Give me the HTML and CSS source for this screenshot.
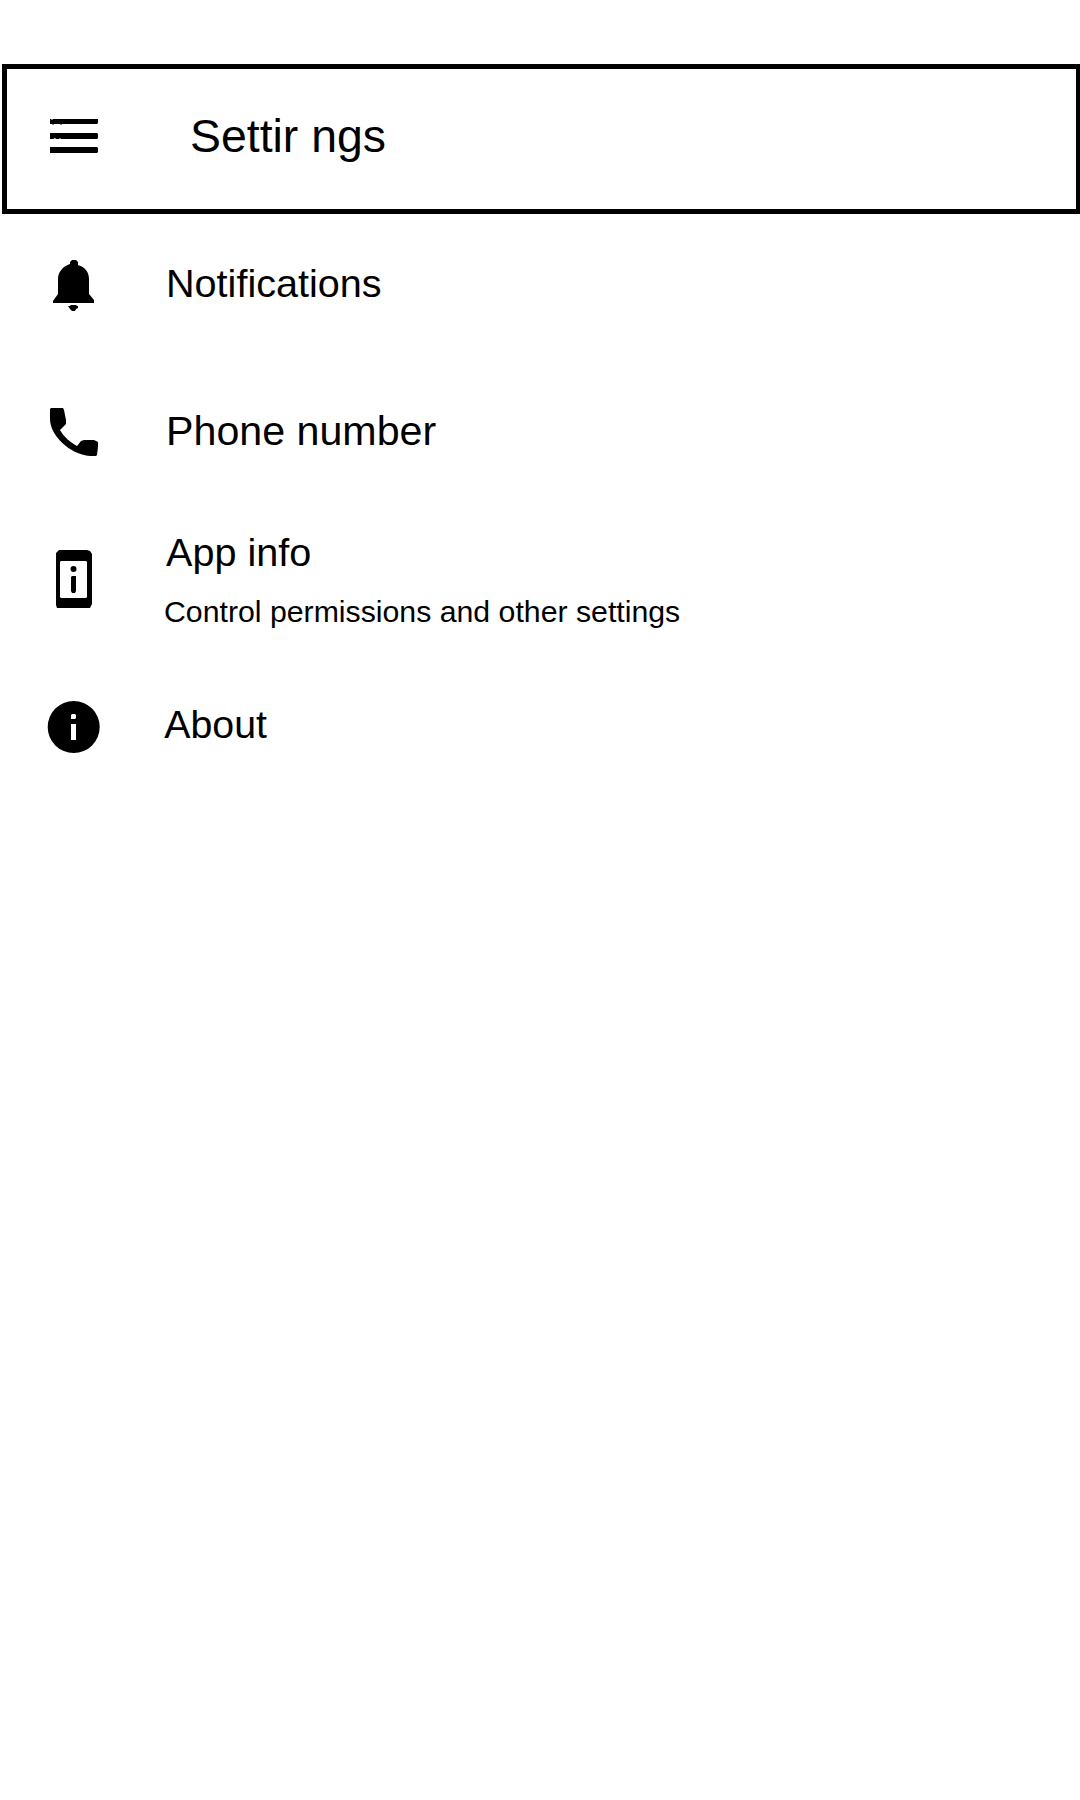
FILE: index.html
```html
<!DOCTYPE html>
<html lang="en">
<head>
<meta charset="utf-8">
<title>Settings</title>
<link rel="stylesheet" href="styles.css">
</head>
<body>
<header class="toolbar">
  <svg class="icon" viewBox="0 0 60 60"><path d="M6 10h1l1 1 1-1h45v4l-1 1H18l-1 1-1-1h-6l-1 1-1-1H6zM6 24h47l1 1v4l-1 1H17l-1-1-1 1h-3l-1-1-2 1H6zM6 38h47l1 1v4l-1 1H6z"/></svg>
  <h1 class="title">Settir ngs</h1>
</header>
<main class="list">
  <div class="row notifications">
    <svg class="icon" viewBox="0 0 60 60"><path d="M26 8V6l2-2h4l2 2v3c7 2 11 7 11 14v15l5 6v3H9v-2l5-7V23c0-7 5-13 12-15zM24 50h2l1-1h5l1 1h1v2l-2 1-1 2h-3l-2-2z"/></svg>
    <span class="label">Notifications</span>
  </div>
  <div class="row phone">
    <svg class="icon" viewBox="0 0 60 60"><path d="M6 8l1-1h12l1 2 2 10v4l-6 6c4 7 10 12 17 16l4-5 3-1h10l4 2v5l-1 8-1 1h-6C25 53 6 34 6 18z"/></svg>
    <span class="label">Phone number</span>
  </div>
  <div class="row app">
    <svg class="icon" viewBox="0 0 60 60"><path fill-rule="evenodd" d="M15 1h28l3 1 2 3v50l-2 4H13l-1-3V4zM17 12h25l1 1v35l-1 1H17l-1-1V13z"/><circle cx="29.5" cy="20" r="3"/><path d="M27 28l1-1h4v15l-1 2h-3l-1-2z"/></svg>
    <div class="texts">
      <span class="label">App info</span>
      <span class="detail">Control permissions and other settings</span>
    </div>
  </div>
  <div class="row about">
    <svg class="icon" viewBox="0 0 60 60"><path fill-rule="evenodd" d="M29.700 4a26 26 0 1 1 0 52a26 26 0 1 1 0-52zM27 18l1-1h3l1 1v3l-1 1h-4zM27 27h5v16h-5z"/></svg>
    <span class="label">About</span>
  </div>
</main>
</body>
</html>
```
FILE: styles.css
```css
* { box-sizing: border-box; }
body {
  margin: 0;
  padding-top: 64px;
  min-height: 1800px;
  background: #fff;
  color: #000;
  font-family: "Liberation Sans", Arial, sans-serif;
}
.toolbar {
  display: flex;
  align-items: center;
  height: 150px;
  margin-left: 2px;
  padding-left: 37px;
  border: 5px solid #000;
  border-right-width: 4px;
}
.icon { width: 60px; height: 60px; flex: none; fill: #000; }
.title {
  margin: 0 0 6px 86px;
  font-size: 46.4px;
  line-height: 56px;
  font-weight: 400;
}
.row { display: flex; align-items: center; height: 146px; padding-left: 44px; }
.label { font-size: 39.6px; line-height: 50px; white-space: nowrap; }
.notifications { height: 144px; }
.notifications .label { margin: 0 0 7px 62px; }
.phone .label { margin-left: 62px; font-size: 41.2px; }
.app { height: 150px; }
.texts { display: flex; flex-direction: column; gap: 15px; margin: 1px 0 0 60px; }
.app .label { margin-left: 2px; }
.detail { font-size: 30.25px; line-height: 40px; white-space: nowrap; }
.about .label { margin: 0 0 7px 60.3px; font-size: 39.3px; }
```
